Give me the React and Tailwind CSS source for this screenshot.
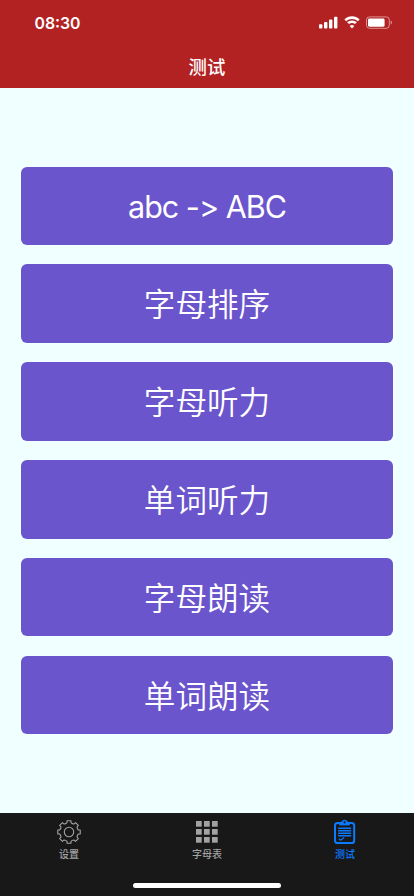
import React, { useState } from 'react';

const tests = ['abc -> ABC', '字母排序', '字母听力', '单词听力', '字母朗读', '单词朗读'];

const TEETH = [0, 45, 90, 135, 180, 225, 270, 315];

// Outline of the gear: one tooth per 45 degrees, joined by short arcs
const gearPath = () => {
  const point = (radius, deg) => {
    const rad = ((deg - 90) * Math.PI) / 180;
    return `${(12 + radius * Math.cos(rad)).toFixed(2)} ${(12 + radius * Math.sin(rad)).toFixed(2)}`;
  };
  const parts = TEETH.map((a, i) => (
    `${i === 0 ? 'M' : 'L'}${point(9.6, a - 12)} L${point(11.4, a - 10)} L${point(11.4, a + 10)} L${point(9.6, a + 12)} A3.9 3.9 0 0 0 ${point(9.6, a + 33)}`
  ));
  return `${parts.join(' ')} Z`;
};

const GearIcon = () => (
  <svg width="24" height="24" viewBox="0 0 24 24" fill="none" stroke="currentColor" strokeWidth="1.1" strokeLinejoin="round">
    <path d={gearPath()} />
    <circle cx="12" cy="12" r="4.7" />
  </svg>
);

const GridIcon = () => (
  <svg width="24" height="24" viewBox="0 0 24 24" fill="currentColor">
    {[1, 9, 17].map((y) => [1, 9, 17].map((x) => (
      <rect key={`${x}-${y}`} x={x} y={y} width="5.7" height="5.7" />
    )))}
  </svg>
);

const ClipboardIcon = () => (
  <svg width="24" height="26" viewBox="0 0 24 26" fill="none" stroke="currentColor" strokeLinecap="round" strokeLinejoin="round">
    <rect x="2" y="4" width="19.2" height="20" rx="2.6" strokeWidth="2" />
    <path d="M6.8 4.6 C6.8 3.4 8 3.2 8.9 3.1 C9.2 0.5 14 0.5 14.3 3.1 C15.2 3.2 16.4 3.4 16.4 4.6 V6 H6.8 Z" fill="currentColor" strokeWidth="0.8" />
    <circle cx="11.6" cy="3.3" r="1.1" fill="#181818" stroke="none" />
    <path d="M5.7 9.2H17.6M5.7 11.7H17.6M5.7 14.2H17.6M5.7 16.7H17.6" strokeWidth="1.5" />
    <path d="M6.1 20L7.6 21.3L10.8 18.7" strokeWidth="1.1" />
  </svg>
);

const tabs = [
  { label: '设置', Icon: GearIcon },
  { label: '字母表', Icon: GridIcon },
  { label: '测试', Icon: ClipboardIcon },
];

const StatusBar = () => (
  <div className="h-11 flex items-start justify-between pl-[34.5px] pr-[21px]">
    <span className="mt-[12px] text-[15.8px] leading-6 font-semibold">08:30</span>
    <div className="mt-[16px] flex items-start">
      <svg width="19" height="13" viewBox="0 0 19 13" fill="currentColor">
        <rect x="0" y="8.3" width="3.4" height="4.2" rx="0.9" />
        <rect x="5" y="6" width="3.4" height="6.5" rx="0.9" />
        <rect x="10" y="3.5" width="3.4" height="9" rx="0.9" />
        <rect x="15" y="0.7" width="3.4" height="11.8" rx="0.9" />
      </svg>
      <svg className="ml-1.5" width="16" height="13" viewBox="0 0 16 13" fill="currentColor">
        <path d="M8 2.9C10.2 2.9 12.2 3.7 13.8 5.2L15.6 3.4C13.5 1.4 10.9 0.3 8 0.3S2.5 1.4 0.4 3.4L2.2 5.2C3.8 3.7 5.8 2.9 8 2.9Z" />
        <path d="M8 7C9.2 7 10.2 7.4 11 8.1L12.9 6.3C11.5 5.1 9.9 4.4 8 4.4S4.5 5.1 3.1 6.3L5 8.1C5.8 7.4 6.8 7 8 7Z" />
        <path d="M8 12.4L10.3 10.1C9.7 9.5 8.9 9 8 9S6.3 9.5 5.7 10.1Z" />
      </svg>
      <svg className="ml-1.5" width="27" height="13" viewBox="0 0 27 13" fill="none">
        <rect x="0.5" y="0.9" width="22.8" height="11.4" rx="3" stroke="currentColor" strokeOpacity="0.5" />
        <rect x="2" y="2.5" width="16.6" height="8.2" rx="1.4" fill="currentColor" />
        <path d="M24.7 4.6C26.4 5.2 26.4 8 24.7 8.6Z" fill="currentColor" fillOpacity="0.55" />
      </svg>
    </div>
  </div>
);

const App = () => {
  const [activeTab, setActiveTab] = useState(2);

  return (
    <div className="h-screen flex flex-col overflow-hidden bg-[#f0ffff] font-['Inter','Noto_Sans_CJK_SC',sans-serif]">
      {/* Navigation bar */}
      <header className="h-[88.3px] shrink-0 bg-[#b22222] text-white">
        <StatusBar />
        <h1 className="h-11 pt-px text-center text-[18.4px] leading-[44px] font-medium">测试</h1>
      </header>

      {/* Test list */}
      <main className="flex-1 px-[21px] pt-[78.3px] flex flex-col gap-[19.6px]">
        {tests.map((name, i) => (
          <button
            key={name}
            className={`h-[78.3px] shrink-0 pt-[3px] rounded-[6px] bg-[#6a55cc] text-white [font-feature-settings:'calt'_0] ${i === 0 ? 'text-[30.5px] font-normal tracking-[-1px]' : 'text-[31.6px] font-[350]'}`}
          >
            {name}
          </button>
        ))}
      </main>

      {/* Tab bar */}
      <nav className="h-[83.5px] shrink-0 bg-[#181818] flex flex-col items-center">
        <div className="w-full h-[70px] grid grid-cols-3">
          {tabs.map(({ label, Icon }, i) => (
            <button
              key={label}
              onClick={() => setActiveTab(i)}
              className={`flex flex-col items-center pt-[6.5px] ${activeTab === i ? 'text-[#0a7aff]' : 'text-[#a2a2a2]'}`}
            >
              <span className="h-[26px] flex items-center">
                <Icon />
              </span>
              <span className="mt-[2px] text-[10px] leading-[15px] font-medium">{label}</span>
            </button>
          ))}
        </div>
        <div className="w-[148px] h-[5px] rounded-full bg-white" />
      </nav>
    </div>
  );
};

export default App;
